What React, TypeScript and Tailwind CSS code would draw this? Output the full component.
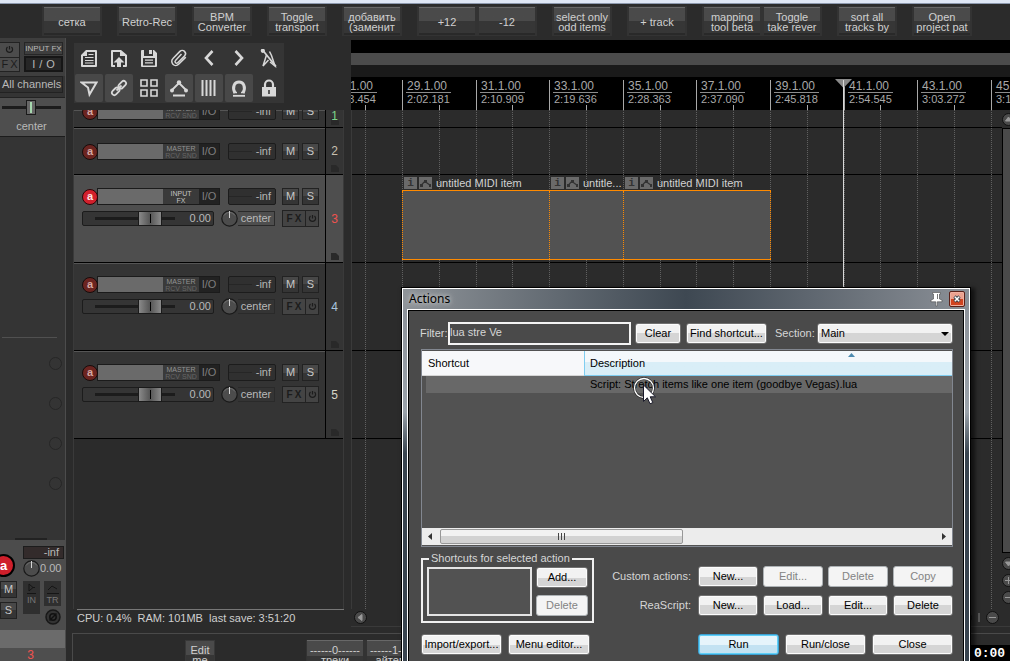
import React from 'react';

type Kids = { children?: React.ReactNode };

const TOOL_GROUPS: string[][][] = [
  [['сетка']],
  [['Retro-Rec']],
  [['BPM', 'Converter']],
  [['Toggle', 'transport']],
  [['добавить', '(заменит']],
  [['+12'], ['-12']],
  [['select only', 'odd items']],
  [['+ track']],
  [['mapping', 'tool beta'], ['Toggle', 'take rever']],
  [['sort all', 'tracks by']],
  [['Open', 'project pat']],
];

function ToolButton({ lines }: { lines: string[] }) {
  return (
    <button className="flex h-[28px] w-[56px] shrink-0 flex-col items-center justify-center overflow-hidden whitespace-nowrap border-t border-[#686868] bg-linear-to-b from-[#4a4a4a] from-50% to-[#363636] to-50% text-[11px] leading-[10px] text-[#d0d0d0] shadow-[inset_0_-2px_0_#292929]">
      {lines.map((l) => (
        <span key={l}>{l}</span>
      ))}
    </button>
  );
}

function TopToolbar() {
  return (
    <div className="flex h-[34px] shrink-0 gap-[15px] pt-0.5 pl-[42px]">
      {TOOL_GROUPS.map((g, i) => (
        <div key={i} className="flex h-[30px] shrink-0 gap-1 border border-[#333] bg-[#333] px-px">
          {g.map((b) => (
            <ToolButton key={b.join()} lines={b} />
          ))}
        </div>
      ))}
    </div>
  );
}

const ICONS: { name: string; on?: boolean; art: React.ReactNode }[] = [
  {
    name: 'New project',
    art: (
      <>
        <path d="M6 1h10a1 1 0 0 1 1 1v15a1 1 0 0 1-1 1H2a1 1 0 0 1-1-1V6zM7 3v4H3v9h12V3z" fill="currentColor" fillRule="evenodd" stroke="none" />
        <path d="M8.500 5.500h5M5 8.500h8.500M5 11.500h8.500M5 14h8.500" />
      </>
    ),
  },
  {
    name: 'Open project',
    art: (
      <>
        <path
          d="M2 1h9l6 5v11a1 1 0 0 1-1 1h-3v-2h2V7h-5V3H3v13h2v2H2a1 1 0 0 1-1-1V2a1 1 0 0 1 1-1z"
          fill="currentColor"
          fillRule="evenodd"
          stroke="none"
        />
        <path d="M9 8l5.500 5.500H11V18H7v-4.500H3.500z" fill="currentColor" stroke="none" />
      </>
    ),
  },
  {
    name: 'Save project',
    art: (
      <path
        d="M2 1h12l3 3v13a1 1 0 0 1-1 1H2a1 1 0 0 1-1-1V2a1 1 0 0 1 1-1zM4 1v6h9V1h-1v4H9V1zM3 9v7.500h12V9zM5 10.500h8v1.300H5zM5 13.200h8v1.300H5z"
        fill="currentColor"
        fillRule="evenodd"
        stroke="none"
      />
    ),
  },
  {
    name: 'Project settings',
    art: <path d="M11.500 5L5.500 11.500a1.500 1.500 0 0 0 2.200 2.200L14.500 7a3.200 3.200 0 0 0-4.600-4.600L3 9.500a4 4 0 0 0 5.600 5.800l7.200-7.200" strokeWidth="1.500" />,
  },
  { name: 'Undo', art: <path d="M12.500 2L6 9l6.500 7" strokeWidth="2.600" /> },
  { name: 'Redo', art: <path d="M5.500 2L12 9l-6.500 7" strokeWidth="2.600" /> },
  {
    name: 'Metronome',
    art: (
      <>
        <path d="M6.500 6L3 17l5.500-6M9.500 2.500l2 4L15 17l-5-4" strokeWidth="1.500" />
        <path d="M2.500 1L16 17.500" strokeWidth="1.800" />
        <circle cx="2.800" cy="1.800" r="1.500" fill="currentColor" />
      </>
    ),
  },
  { name: 'Auto crossfade', on: true, art: <path d="M1.500 3.500h15L9.500 15.500 8 8.500z" strokeWidth="2" /> },
  {
    name: 'Item grouping',
    on: true,
    art: (
      <>
        <rect x="-4.300" y="-2.400" width="8.600" height="4.800" rx="2.400" transform="translate(12.300 5.700) rotate(-45)" strokeWidth="1.800" />
        <rect x="-4.300" y="-2.400" width="8.600" height="4.800" rx="2.400" transform="translate(5.700 12.300) rotate(-45)" strokeWidth="1.800" />
        <path d="M6.500 11.500l5-5" strokeWidth="1.800" />
      </>
    ),
  },
  {
    name: 'Ripple editing',
    art: <path d="M1 1h6v6H1zM11 1h6v6h-6zM1 11h6v6H1zM11 11h6v6h-6z" strokeWidth="1.600" />,
  },
  {
    name: 'Envelope points',
    on: true,
    art: (
      <>
        <path d="M1.500 11.500L9 4l7.500 7.500M3 16.500h12" strokeWidth="1.800" strokeLinejoin="round" />
        <circle cx="9" cy="3.500" r="2.200" fill="currentColor" stroke="none" />
        <circle cx="2" cy="11.500" r="2" fill="currentColor" stroke="none" />
        <circle cx="16" cy="11.500" r="2" fill="currentColor" stroke="none" />
      </>
    ),
  },
  { name: 'Grid lines', on: true, art: <path d="M2.500 1v16M6.500 1v16M10.500 1v16M14.500 1v16" strokeWidth="2" /> },
  {
    name: 'Snap',
    on: true,
    art: (
      <>
        <path d="M5 14C1.800 8 4.500 3 9 3s7.200 5 4 11" strokeWidth="3" />
        <path d="M3.500 13.500h3.500M11 13.500h3.500" strokeWidth="1.400" />
        <path d="M3 16.800h12" strokeWidth="1.800" />
      </>
    ),
  },
  {
    name: 'Lock',
    art: (
      <>
        <path d="M5 8V5.500a4 4 0 0 1 8 0V8" strokeWidth="2.200" />
        <path d="M2 8h14v9.500H2zM8.200 11v4h1.600v-4z" fill="currentColor" fillRule="evenodd" stroke="none" />
      </>
    ),
  },
];

function IconPanel() {
  return (
    <div className="grid h-[60px] w-[210px] grid-cols-7 grid-rows-2 bg-[#353535]">
      {ICONS.map((ic) => (
        <button
          key={ic.name}
          aria-label={ic.name}
          className={
            ic.on
              ? 'm-px flex items-center justify-center rounded-xs bg-[#484848] text-[#d8d8d8]'
              : 'm-px flex items-center justify-center text-[#d8d8d8]'
          }
        >
          <svg width="18" height="19" viewBox="0 0 18 19" fill="none" stroke="currentColor" strokeWidth="1.200">
            {ic.art}
          </svg>
        </button>
      ))}
    </div>
  );
}

function Power({ size }: { size: number }) {
  return (
    <svg width={size} height={size} viewBox="0 0 10 10" fill="none" stroke="currentColor" strokeWidth="1.400">
      <path d="M5 1v4M2.800 2.300a3.400 3.400 0 1 0 4.400 0" />
    </svg>
  );
}

function Knob() {
  return (
    <svg width="17" height="17" viewBox="0 0 17 17" className="shrink-0">
      <circle cx="8.500" cy="8.500" r="7.700" fill="#4c4c4c" stroke="#191919" strokeWidth="1.200" />
      <path d="M3 5.500a6.500 6.500 0 0 1 11 0" stroke="#707070" fill="none" />
      <path d="M8.500 1v7" stroke="#d5d5d5" />
    </svg>
  );
}

function Small({ children, label }: Kids & { label: string }) {
  return (
    <button
      aria-label={label}
      className="flex h-[17px] w-[17px] items-center justify-center border border-[#222] bg-linear-to-b from-[#484848] from-50% to-[#353535] to-50% text-[11px] leading-none text-[#c8c8c8]"
    >
      {children}
    </button>
  );
}

function Meter() {
  return (
    <div className="flex h-[17px] w-[48px] items-center justify-end rounded-xs border border-[#1c1c1c] bg-[#303030] pr-1 text-[11px] leading-none text-[#b5b5b5]">
      <span className="mr-1 h-px flex-1 bg-[#262626]" />
      -inf
    </div>
  );
}

function TrackTop({ armed }: { armed?: boolean }) {
  return (
    <div className="flex h-[17px] shrink-0 items-center">
      <button
        aria-label="Record arm"
        className={
          armed
            ? 'z-10 -mr-px flex h-4 w-4 items-center justify-center rounded-full border border-[#2a0507] bg-[#d2202c] text-[11px] font-bold leading-none text-[#ffe3e3]'
            : 'z-10 -mr-px flex h-4 w-4 items-center justify-center rounded-full border border-[#160c0b] bg-[#6b2420] text-[11px] font-bold leading-none text-[#d6a9a3]'
        }
      >
        a
      </button>
      <div className="flex h-[17px] w-[123px] border border-[#1b1b1b] bg-[#3a3a3a]">
        <div className="w-[65px] bg-[#6a6a6a]" />
        <div className="flex w-[36px] flex-col items-center justify-center whitespace-nowrap text-[7px] leading-[7px] text-[#929292]">
          {armed ? (
            <>
              <span className="text-[#c4c4c4]">INPUT</span>
              <span className="text-[#c4c4c4]">FX</span>
            </>
          ) : (
            <>
              <span>MASTER</span>
              <span className="text-[#666]">RCV SND</span>
            </>
          )}
        </div>
        <div className="flex flex-1 items-center justify-center bg-[#222] text-[11px] leading-none text-[#7e7e7e]">I/O</div>
      </div>
      <div className="ml-2">
        <Meter />
      </div>
      <div className="ml-1.5 flex gap-[3px]">
        <Small label="Mute">M</Small>
        <Small label="Solo">S</Small>
      </div>
    </div>
  );
}

function TrackBottom() {
  return (
    <div className="mt-[5px] flex h-[17px] shrink-0 items-center">
      <div className="flex h-[15px] w-[132px] items-center rounded-xs border border-[#1c1c1c] bg-[#353535] pr-0.5">
        <span className="ml-3 h-[3px] w-[43px] bg-[#1c1c1c]" />
        <span className="flex h-[15px] w-[24px] justify-center border border-[#1a1a1a] bg-linear-to-r from-[#8a8a8a] via-[#555] to-[#8a8a8a] py-0.5">
          <span className="w-px bg-black" />
        </span>
        <span className="h-[3px] w-[13px] bg-[#1c1c1c]" />
        <span className="ml-auto text-[11px] leading-none text-[#b9b9b9]">0.00</span>
      </div>
      <div className="ml-[7px] flex w-[54px] items-center">
        <Knob />
        <span className="flex h-[15px] flex-1 items-center justify-center border border-l-0 border-[#2a2a2a] text-[11px] leading-none text-[#b9b9b9]">
          center
        </span>
      </div>
      <div className="ml-[7px] flex h-[17px] w-[37px] border border-[#222] bg-[#444] text-[#1c1c1c]">
        <button aria-label="Effects" className="flex flex-1 items-center justify-center gap-0.5 border-r border-[#222] text-[10px] font-bold leading-none">
          <span>F</span>
          <span>X</span>
        </button>
        <button aria-label="Bypass effects" className="flex w-[12px] items-center justify-center">
          <Power size={9} />
        </button>
      </div>
    </div>
  );
}

const TRACKS = [
  { n: 1, row: 'h-[18px] justify-end pb-[7px]', num: 'items-start text-[#7fd48b]', full: false },
  { n: 2, row: 'h-[47px] pt-[15px]', num: 'items-center text-[#c8c0b0]', full: false },
  { n: 3, row: 'h-[88px] pt-[13px]', num: 'items-center text-[#f0524f]', full: true, armed: true },
  { n: 4, row: 'h-[88px] pt-[13px]', num: 'items-center text-[#a9c4dd]', full: true },
  { n: 5, row: 'h-[88px] pt-[13px]', num: 'items-center text-[#d8d8c8]', full: true },
];

function TrackPanel() {
  return (
    <div className="flex w-[271px] shrink-0 flex-col">
      <div className="flex h-[72px] shrink-0 pt-[5px] pl-px">
        <IconPanel />
      </div>
      <div className="flex-1 border-x border-[#3a3a3a]">
        {TRACKS.map((t) => (
          <div key={t.n} className={t.armed ? 'flex bg-[#4e4e4e]' : 'flex bg-[#343434]'}>
            <div className={'flex flex-1 flex-col overflow-hidden border-b border-black pl-2 shadow-[inset_0_1px_0_#555] ' + t.row}>
              <TrackTop armed={t.armed} />
              {t.full && <TrackBottom />}
            </div>
            <div
              className={
                'relative flex w-[18px] justify-center overflow-hidden border-b border-l border-black text-[12px] leading-none ' + t.num
              }
            >
              <svg width="8" height="7" viewBox="0 0 8 7" className="absolute right-1 bottom-0.5">
                <path d="M0 0h5l3 3v4H0z" fill="#292929" />
              </svg>
              <span className="relative">{t.n}</span>
            </div>
          </div>
        ))}
      </div>
      <div className="ml-1 h-[24px] shrink-0 border-t border-[#777] pt-0.5 text-[11px] leading-[13px] whitespace-pre text-[#cfcfcf]">
        CPU: 0.4%{'  '}RAM: 101MB{'  '}last save: 3:51:20
      </div>
    </div>
  );
}

const BAR = 36.8;
const barX = (bar: number) => Math.round(51 + (bar - 29) * BAR);

const MARKS = [
  [27, '27.1.00', '1:53.454'],
  [29, '29.1.00', '2:02.181'],
  [31, '31.1.00', '2:10.909'],
  [33, '33.1.00', '2:19.636'],
  [35, '35.1.00', '2:28.363'],
  [37, '37.1.00', '2:37.090'],
  [39, '39.1.00', '2:45.818'],
  [41, '41.1.00', '2:54.545'],
  [43, '43.1.00', '3:03.272'],
  [45, '45.1.00', '3:12.000'],
] as const;

const BARS = Array.from({ length: 18 }, (_, i) => 28 + i);

const ITEMS = [
  { from: 29, to: 33, name: 'untitled MIDI item' },
  { from: 33, to: 35, name: 'untitle...' },
  { from: 35, to: 39, name: 'untitled MIDI item' },
];

function Ruler() {
  return (
    <div className="relative h-[33px] shrink-0 overflow-hidden bg-black text-[12px] text-[#a8a8a8]">
      {MARKS.map(([bar, pos, time]) => (
        <div key={bar} className="absolute top-[3px] h-[30px] border-l border-[#a8a8a8] pl-[3px] leading-[12px]" style={{ left: barX(bar) }}>
          <div className="border-b border-[#8c8c8c] px-px">{pos}</div>
          <div className="px-px text-[11px]">{time}</div>
        </div>
      ))}
      {BARS.filter((b) => b % 2 === 0).map((b) => (
        <span key={b} className="absolute bottom-0 h-[5px] w-px bg-[#a8a8a8]" style={{ left: barX(b) }} />
      ))}
    </div>
  );
}

function MidiItem({ from, to, name }: { from: number; to: number; name: string }) {
  return (
    <div className="absolute top-[66px] flex h-[84px] flex-col" style={{ left: barX(from), width: barX(to) - barX(from) + 1 }}>
      <div className="flex h-[14px] items-center gap-0.5 overflow-hidden pl-0.5 text-[11px] leading-none whitespace-nowrap text-[#d2d2d2]">
        <span className="flex h-[12px] w-[13px] shrink-0 items-center justify-center bg-[#6a6a6a] font-[Liberation_Mono] text-[11px] font-bold text-[#333]">
          i
        </span>
        <svg width="13" height="12" viewBox="0 0 13 12" className="shrink-0">
          <path d="M0 0h13v12H0z" fill="#6a6a6a" />
          <path d="M2 8.500L6 4l2 2 3.500 2.500" stroke="#333" strokeWidth="1.200" fill="none" />
          <path d="M1 7h3v3H1zM5 3h3v3H5zM10 7h2v3h-2z" fill="#333" />
        </svg>
        <span className="ml-0.5">{name}</span>
      </div>
      <div className="flex flex-1 justify-between border-y border-[#ff8a00] bg-[#525252]">
        <span className="w-px border-l border-dotted border-[#ff8a00]" />
        <span className="w-px border-l border-dotted border-[#ff8a00]" />
      </div>
    </div>
  );
}

function Round({ children, label }: Kids & { label: string }) {
  return (
    <button aria-label={label} className="flex h-[13px] w-[13px] shrink-0 items-center justify-center rounded-full border border-[#111] bg-[#4a4a4a]">
      <svg width="9" height="9" viewBox="0 0 9 9" fill="#999" stroke="#999">
        {children}
      </svg>
    </button>
  );
}

function Arrange() {
  return (
    <div className="relative ml-[7px] flex min-w-0 flex-1 flex-col pt-0.5">
      <div className="h-[13px] shrink-0 bg-black" />
      <div className="h-[12px] shrink-0 bg-[#4b4b4b]" />
      <div className="h-[12px] shrink-0 bg-[#1a1a1a]" />
      <Ruler />
      <div className="flex min-h-0 flex-1">
        <div className="relative min-w-0 flex-1 overflow-hidden border-l border-[#3a3a3a]">
          {['h-[18px]', 'h-[47px]', 'h-[88px]', 'h-[88px]', 'h-[88px]'].map((h, i) => (
            <div key={i} className={'border-b border-black ' + h} />
          ))}
          <div className="absolute inset-y-0 -left-px w-full">
            {BARS.map((b) => (
              <span key={b} className="absolute inset-y-0 border-l border-dotted border-[#606060]" style={{ left: barX(b) }} />
            ))}
            {ITEMS.map((it) => (
              <MidiItem key={it.from} {...it} />
            ))}
          </div>
        </div>
        <div className="flex w-[8px] flex-col">
          <div className="flex h-[18px] items-center">
            <Round label="Scroll up">
              <path d="M4.500 2l3 4h-6z" />
            </Round>
          </div>
          <div className="flex-1 border border-r-0 border-black bg-[#4a4a4a]" />
          <div className="flex h-[56px] flex-col gap-1 pt-1">
            <Round label="Scroll down">
              <path d="M4.500 7l3-4h-6z" />
            </Round>
            <Round label="Zoom in vertically">
              <path d="M4.500 1v7M1 4.500h7" />
            </Round>
            <Round label="Zoom out vertically">
              <path d="M1 4.500h7" />
            </Round>
          </div>
        </div>
      </div>
      <div className="mb-1.5 flex h-[18px] shrink-0 items-center gap-1.5 border-b border-[#3a3a3a] pr-[11px] pl-[3px]">
        <Round label="Scroll left">
          <path d="M2 4.500l4-3v6z" />
        </Round>
        <span className="flex-1" />
        <Round label="Zoom in">
          <path d="M4.500 1v7M1 4.500h7" />
        </Round>
        <span className="h-[9px] w-0.5 bg-[#555]" />
        <Round label="Zoom out">
          <path d="M1 4.500h7" />
        </Round>
      </div>
      <svg width="17" height="9" viewBox="0 0 17 9" className="absolute top-[41px] left-[484px]">
        <path d="M0 0h17L8.500 9z" fill="#8a8a8a" />
      </svg>
      <span className="absolute top-[42px] bottom-6 left-[492px] w-px bg-[#d8d8d8]" />
    </div>
  );
}

function MixerStrip() {
  return (
    <aside className="flex w-[66px] shrink-0 flex-col overflow-hidden border-r border-[#4c4c4c] bg-[#343434] text-[#b9b9b9]">
      <div className="flex h-[38px] shrink-0 items-start justify-between bg-[#3e3e3e] pt-1 pr-0.5">
        <div className="flex h-[30px] w-[20px] flex-col border border-l-0 border-[#222] bg-[#4c4c4c] text-[#1c1c1c]">
          <button aria-label="Bypass effects" className="flex flex-1 items-center justify-center border-b border-[#222]">
            <Power size={9} />
          </button>
          <button aria-label="Effects" className="flex flex-1 items-center justify-center gap-0.5 text-[11px] leading-none">
            <span>F</span>
            <span>X</span>
          </button>
        </div>
        <div className="flex w-[39px] flex-col gap-px">
          <button className="h-[13px] border border-[#262626] text-[8px] leading-none whitespace-nowrap">INPUT FX</button>
          <button aria-label="Input and output" className="flex h-[16px] items-center justify-center gap-1 border-2 border-[#161616] bg-[#262626] text-[11px] leading-none">
            <span>I</span>
            <span>/</span>
            <span>O</span>
          </button>
        </div>
      </div>
      <div className="mr-0.5 flex h-[17px] shrink-0 items-center border border-l-0 border-[#222] bg-[#303030] pl-0.5 text-[11px] leading-none whitespace-nowrap">
        All channels
      </div>
      <div className="mt-1 flex h-[39px] shrink-0 flex-col items-center border-t border-[#222] bg-[#4e4e4e]">
        <div className="mt-0.5 flex h-[15px] w-full items-center px-0.5">
          <span className="h-[3px] flex-1 bg-[#1c1c1c]" />
          <span className="flex h-[15px] w-[10px] justify-center border border-[#1a1a1a] bg-[#666] py-px">
            <span className="w-0.5 bg-[#a6d8ae]" />
          </span>
          <span className="mr-0.5 h-[3px] w-[25px] bg-[#1c1c1c]" />
        </div>
        <span className="mt-1 pr-0.5 text-[11px] leading-[14px]">center</span>
      </div>
      <div className="flex flex-1 flex-col border-t border-[#1c1c1c]">
        <div className="h-[200px]" />
        <div className="mr-2 ml-0.5 border-t border-[#505050]" />
        <div className="mt-[19px] flex flex-col items-end gap-[27px] pr-[3px]">
          {[0, 1, 2, 3].map((k) => (
            <span key={k} className="h-[13px] w-[13px] rounded-full border border-[#262626]" />
          ))}
        </div>
        <div className="mt-auto mr-[18px] ml-[15px] h-0.5 bg-[#222]" />
      </div>
      <div className="flex h-[90px] shrink-0 gap-1 bg-[#4c4c4c] pt-1.5">
        <div className="flex w-[18px] shrink-0 flex-col">
          <button
            aria-label="Record arm"
            className="mt-2 -ml-2 flex h-[23px] w-[23px] items-center justify-center rounded-full border-2 border-black bg-[#cf1f2b] text-[13px] font-bold leading-none text-white"
          >
            a
          </button>
          <div className="mt-1 flex flex-col gap-1">
            <Small label="Mute">M</Small>
            <Small label="Solo">S</Small>
          </div>
        </div>
        <div className="flex flex-1 flex-col pl-px">
          <div className="mr-px flex h-[13px] items-center justify-end border border-[#1c1c1c] bg-[#332b2b] pr-1 text-[11px] leading-none">-inf</div>
          <div className="mt-px mb-1 flex h-[17px] items-center">
            <Knob />
            <span className="text-[11px] leading-none text-[#b9b9b9]">0.00</span>
          </div>
          <div className="flex gap-1 text-[9px] leading-none text-[#777]">
            <div className="flex h-[33px] w-[17px] flex-col items-center bg-[#2f2f2f] pt-0.5">
              <svg width="9" height="9" viewBox="0 0 9 9" fill="none" stroke="#151515">
                <path d="M2 1l4 3.500-4 3.500zM6 4.500h2" />
              </svg>
              <span className="mt-px border-t border-[#151515] pt-0.5">IN</span>
            </div>
            <div className="flex w-[17px] flex-col items-center">
              <div className="flex h-[25px] w-full flex-col items-center bg-[#2f2f2f] pt-0.5">
                <svg width="11" height="9" viewBox="0 0 11 9" fill="none" stroke="#151515">
                  <path d="M1 7l4-4 5 3" />
                </svg>
                <span className="mt-px border-t border-[#151515] pt-0.5">TR</span>
              </div>
              <svg width="16" height="16" viewBox="0 0 16 16" className="mt-[3px] shrink-0">
                <circle cx="8" cy="8" r="7" fill="#333" stroke="#181818" strokeWidth="1.500" />
                <path d="M4.500 11.500l7-7" stroke="#111" strokeWidth="1.500" />
                <circle cx="8" cy="8" r="3.200" fill="none" stroke="#111" strokeWidth="1.500" />
              </svg>
            </div>
          </div>
        </div>
      </div>
      <div className="h-[18px] shrink-0 bg-[#6b6b6b]" />
      <div className="h-[13px] shrink-0 bg-[#4e4e4e] pr-1 text-center text-[12px] leading-[14px] text-[#f0524f]">3</div>
    </aside>
  );
}

function WinButton({ children, className = '', disabled, primary }: Kids & { className?: string; disabled?: boolean; primary?: boolean }) {
  const look = disabled
    ? 'border-[#adb2b5] bg-[#f4f4f4] text-[#838383] '
    : primary
      ? 'border-[#3c9fd0] bg-linear-to-b from-[#e6f4fb] from-50% to-[#c3e2f2] to-50% text-black shadow-[inset_0_0_0_1px_#5fd0f8] '
      : 'border-[#707070] bg-linear-to-b from-[#f2f2f2] from-50% to-[#d5d5d5] to-50% text-black shadow-[inset_0_0_0_1px_#fcfcfc] ';
  return (
    <button disabled={disabled} className={'h-[21px] rounded-[3px] border text-[11px] leading-none whitespace-nowrap ' + look + className}>
      {children}
    </button>
  );
}

function ActionsWindow() {
  return (
    <div
      role="dialog"
      aria-label="Actions"
      className="absolute top-[288px] -bottom-10 left-[402px] flex w-[568px] flex-col border border-white bg-linear-to-b from-[#8b9097] via-[#9aa2aa] via-30% to-[#39444f] to-40% px-1 shadow-[0_0_0_1px_#000,3px_2px_4px_2px_rgba(0,0,0,0.6)]"
    >
      <div className="-mx-1 flex h-[20px] shrink-0 items-center bg-linear-to-r from-[#8f9499] via-[#3e4852] via-50% to-[#8b9097] pr-1 pl-1.5">
        <span className="flex-1 font-[Noto_Sans] text-[12px] leading-none text-black [text-shadow:0_0_6px_#ccc,0_0_4px_#ccc]">Actions</span>
        <button aria-label="Pin window" className="mr-1.5">
          <svg width="13" height="15" viewBox="0 0 13 15">
            <path d="M2.500 .500h8v1.500h-1v5l2.500 1v1.800H7.200V14H5.800V9.800H1V8l2.500-1V2h-1z" fill="#fff" stroke="#4a4a4a" strokeWidth=".6" />
            <path d="M7.500 2v5" stroke="#777" />
          </svg>
        </button>
        <button
          aria-label="Close window"
          className="flex h-[16px] w-[16px] items-center justify-center rounded-xs border border-[#5a2018] bg-linear-to-b from-[#eda290] from-50% to-[#d0431f] to-50% shadow-[inset_0_0_0_1px_#f0b0a0]"
        >
          <svg width="8" height="8" viewBox="0 0 8 8">
            <path d="M1.500 1.500l5 5M6.500 1.500l-5 5" stroke="#38414b" strokeWidth="3.200" />
            <path d="M1.800 1.800l4.400 4.400M6.200 1.800L1.800 6.200" stroke="#fff" strokeWidth="1.500" />
          </svg>
        </button>
      </div>
      <div className="flex-1 border border-white">
        <div className="flex h-full flex-col border border-black bg-[#4a4a4a] pt-[11px] pr-2.5 pl-3 text-[11px] leading-none text-[#d6d6d6]">
          <div className="flex h-[23px] items-center">
            <label htmlFor="filter" className="-ml-px w-[28px]">
              Filter:
            </label>
            <input
              id="filter"
              defaultValue="lua stre Ve"
              className="h-[23px] w-[183px] border-2 border-[#f4f4f4] bg-[#4a4a4a] pb-1 text-[11px] leading-none text-[#d6d6d6] outline-none"
            />
            <WinButton className="ml-1 w-[46px]">Clear</WinButton>
            <WinButton className="ml-[5px] w-[81px]">Find shortcut...</WinButton>
            <label htmlFor="section" className="ml-2 w-[42px]">
              Section:
            </label>
            <div className="relative flex-1">
              <select
                id="section"
                className="h-[21px] w-full appearance-none rounded-[3px] border border-[#707070] bg-linear-to-b from-[#f2f2f2] from-50% to-[#d5d5d5] to-50% pl-[3px] text-[11px] leading-none text-black shadow-[inset_0_0_0_1px_#fcfcfc]"
              >
                <option>Main</option>
              </select>
              <svg width="8" height="4" viewBox="0 0 8 4" className="pointer-events-none absolute top-[9px] right-1">
                <path d="M0 0h8L4 4z" fill="#000" />
              </svg>
            </div>
          </div>
          <div className="mt-1 flex h-[198px] flex-col border border-[#828790] bg-[#525252] pt-px">
            <table className="w-full table-fixed border-separate border-spacing-0 text-left text-black">
              <thead>
                <tr className="h-[25px]">
                  <th className="w-[162px] border-b border-[#d5d5d5] bg-[#f7f8fa] pl-1.5 font-normal">Shortcut</th>
                  <th className="relative border-b border-l border-[#7fcdf0] bg-linear-to-b from-[#f4f8fb] from-45% to-[#d9eef7] to-45% pl-[5px] font-normal">
                    Description
                    <svg width="7" height="4" viewBox="0 0 7 4" className="absolute top-0.5 right-[97px]">
                      <path d="M0 4h7L3.500 0z" fill="#4d8bb0" />
                    </svg>
                  </th>
                </tr>
              </thead>
              <tbody>
                <tr className="h-[17px]">
                  <td className="border-l-4 border-[#525252] bg-[#686868]" />
                  <td className="bg-[#686868] pl-1.5 whitespace-nowrap">Script: Stretch items like one item (goodbye Vegas).lua</td>
                </tr>
              </tbody>
            </table>
            <div className="mt-auto mb-px flex h-[17px] items-center bg-[#ececec]">
              <svg width="18" height="7" viewBox="0 0 18 7" className="shrink-0">
                <path d="M10 0v7L6 3.500z" fill="#333" />
              </svg>
              <div className="flex h-[15px] w-[243px] items-center justify-center gap-px rounded-xs border border-[#979797] bg-linear-to-b from-[#f2f2f2] from-50% to-[#d2d2d2] to-50%">
                {[0, 1, 2].map((k) => (
                  <span key={k} className="mr-px h-[7px] w-px bg-[#444]" />
                ))}
              </div>
              <svg width="18" height="7" viewBox="0 0 18 7" className="ml-auto shrink-0">
                <path d="M8 0v7l4-3.500z" fill="#333" />
              </svg>
            </div>
          </div>
          <div className="mt-[5px] flex items-start justify-between">
            <fieldset className="h-[71px] w-[173px] border-2 border-[#f0f0f0] px-1">
              <legend className="ml-0.5 px-0.5 leading-[13px] whitespace-nowrap">Shortcuts for selected action</legend>
              <div className="mt-0.5 flex justify-between">
                <div className="h-[49px] w-[105px] border-2 border-[#e4e4e4] bg-[#525252]" />
                <div className="flex flex-col gap-[7px]">
                  <WinButton className="w-[52px]">Add...</WinButton>
                  <WinButton className="w-[52px]" disabled>
                    Delete
                  </WinButton>
                </div>
              </div>
            </fieldset>
            <div className="mt-[14px] grid grid-cols-[auto_60px_60px_60px_60px] items-center gap-x-[5px] gap-y-2 text-right">
              <span className="pr-0.5">Custom actions:</span>
              <WinButton>New...</WinButton>
              <WinButton disabled>Edit...</WinButton>
              <WinButton disabled>Delete</WinButton>
              <WinButton disabled>Copy</WinButton>
              <span className="pr-0.5">ReaScript:</span>
              <WinButton>New...</WinButton>
              <WinButton>Load...</WinButton>
              <WinButton>Edit...</WinButton>
              <WinButton>Delete</WinButton>
            </div>
          </div>
          <div className="mt-[11px] flex gap-1.5">
            <WinButton className="w-[81px]">Import/export...</WinButton>
            <WinButton className="mr-auto w-[82px]">Menu editor...</WinButton>
            <WinButton className="w-[81px]" primary>
              Run
            </WinButton>
            <WinButton className="w-[81px]">Run/close</WinButton>
            <WinButton className="w-[81px]">Close</WinButton>
          </div>
        </div>
      </div>
    </div>
  );
}

function BottomToolbar() {
  return (
    <div className="ml-1.5 flex h-[28px] shrink-0 overflow-hidden border-t border-l border-[#4a4a4a] pt-1.5 pl-[112px] text-[11px] leading-[10px] text-[#d0d0d0]">
      <button className="flex h-[30px] w-[30px] flex-col items-center border border-[#383838] bg-linear-to-b from-[#4a4a4a] from-50% to-[#363636] to-50% pt-1">
        <span>Edit</span>
        <span>me</span>
      </button>
      <div className="ml-[91px] flex gap-1 bg-[#333] px-px">
        <button className="flex h-[30px] w-[56px] flex-col items-center overflow-hidden border-t border-[#686868] bg-linear-to-b from-[#4a4a4a] from-50% to-[#363636] to-50% pt-1 whitespace-nowrap">
          <span>------0------</span>
          <span>треки</span>
        </button>
        <button className="flex h-[30px] w-[56px] flex-col items-center overflow-hidden border-t border-[#686868] bg-linear-to-b from-[#4a4a4a] from-50% to-[#363636] to-50% pt-1 whitespace-nowrap">
          <span>------1------</span>
          <span>айтемы</span>
        </button>
      </div>
    </div>
  );
}

export default function App() {
  return (
    <div className="relative flex h-screen flex-col overflow-hidden bg-[#2b2b2b] font-['Liberation_Sans',Arial,sans-serif]">
      <div className="h-1 shrink-0 border-b border-[#8d99ae] bg-[#dfe7f5]" />
      <TopToolbar />
      <div className="flex min-h-0 flex-1">
        <MixerStrip />
        <div className="flex min-w-0 flex-1 flex-col">
          <div className="flex min-h-0 flex-1 pl-[7px]">
            <TrackPanel />
            <Arrange />
          </div>
          <BottomToolbar />
        </div>
      </div>
      <ActionsWindow />
      <svg width="24" height="30" viewBox="0 0 24 30" className="pointer-events-none absolute top-[377px] left-[633px]">
        <circle cx="11" cy="11" r="9.500" fill="none" stroke="#222" strokeWidth="2.500" />
        <circle cx="11" cy="11" r="9.500" fill="none" stroke="#fff" strokeWidth="1.300" />
        <path d="M10.500 8v16.500l3.800-3.700 2.700 6 2.800-1.200-2.600-5.800h5.300z" fill="#fff" stroke="#1a1a2a" />
      </svg>
      <div className="absolute right-0 bottom-0 flex h-[16px] w-[39px] items-center justify-center bg-black pr-0.5 font-[Liberation_Mono] text-[13px] font-bold leading-none text-white">
        0:00
      </div>
    </div>
  );
}
